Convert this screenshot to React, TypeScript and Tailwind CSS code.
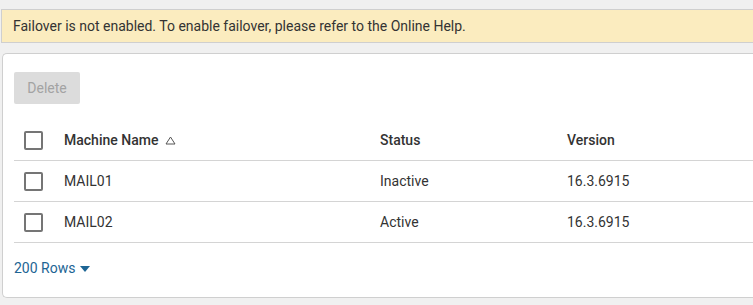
import React from 'react';

type Machine = { name: string; status: string; version: string };

const MACHINES: Machine[] = [
  { name: 'MAIL01', status: 'Inactive', version: '16.3.6915' },
  { name: 'MAIL02', status: 'Active', version: '16.3.6915' },
];

function Checkbox() {
  return <span className="block w-[19px] h-[19px] border-2 border-[#757575] rounded-[2px] bg-white" />;
}

function Row({ children, header = false }: { children: React.ReactNode; header?: boolean }) {
  return (
    <div
      className={`flex items-center h-[41px] border-b border-[#d4d4d4] ${
        header ? 'font-medium text-[#333]' : 'text-[#333]'
      }`}
    >
      {children}
    </div>
  );
}

export default function App() {
  return (
    <div
      className="h-[305px] w-[753px] overflow-hidden bg-[#f0f0f0] pt-[9px] text-[14px]"
      style={{ fontFamily: 'Roboto, "Liberation Sans", sans-serif' }}
    >
      {/* Failover notice */}
      <div className="ml-[1px] h-[34px] flex items-center pl-[11px] bg-[#fbecbf] border-y border-l border-[#cfcfcf] text-[#333]">
        Failover is not enabled. To enable failover, please refer to the Online Help.
      </div>

      {/* Machines panel */}
      <div className="mt-[10px] ml-[2px] h-[245px] bg-white border-y border-l border-[#cfcfcf] rounded-l-[5px] pl-[11px] pt-[18px]">
        <button
          disabled
          className="w-[66px] h-[32px] rounded-[2px] bg-[#dcdcdc] text-[#a3a3a3] text-[14px]"
        >
          Delete
        </button>

        <div className="mt-[16px]">
          <Row header>
            <div className="w-[50px] pl-[10px]">
              <Checkbox />
            </div>
            <div className="w-[316px] flex items-center gap-[7px]">
              Machine Name
              <svg width="11" height="9" viewBox="0 0 11 9" className="mt-[1px]">
                <path d="M5.5 1 L10 8 L1 8 Z" fill="none" stroke="#555" strokeWidth="1" />
              </svg>
            </div>
            <div className="w-[187px]">Status</div>
            <div>Version</div>
          </Row>
          {MACHINES.map((m) => (
            <Row key={m.name}>
              <div className="w-[50px] pl-[10px]">
                <Checkbox />
              </div>
              <div className="w-[316px]">{m.name}</div>
              <div className="w-[187px]">{m.status}</div>
              <div>{m.version}</div>
            </Row>
          ))}
        </div>

        <div className="mt-[15px] flex items-center gap-[5px] text-[#1d6594]">
          200 Rows
          <svg width="10" height="6" viewBox="0 0 10 6">
            <path d="M0 0 L10 0 L5 6 Z" fill="#1d6594" />
          </svg>
        </div>
      </div>
    </div>
  );
}
